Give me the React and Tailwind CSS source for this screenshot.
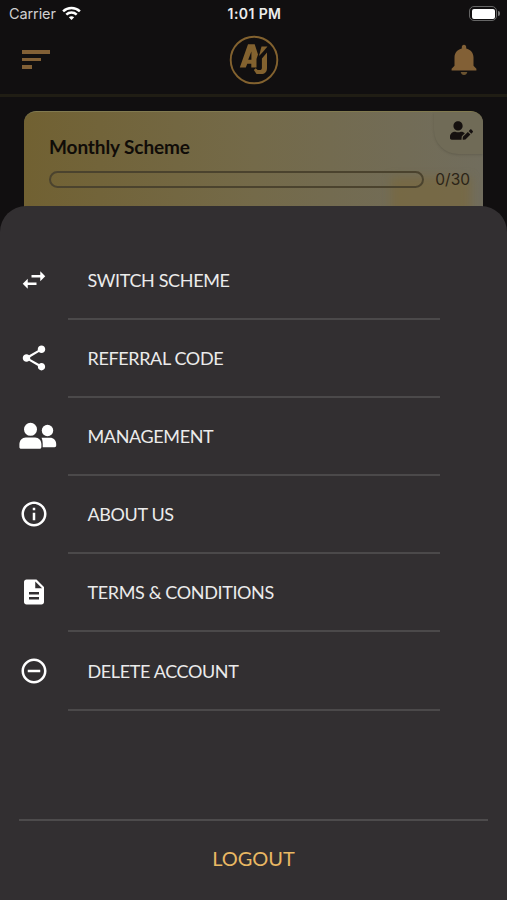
import React from 'react';
import { MdSwapHoriz, MdShare, MdInfoOutline, MdDescription, MdRemoveCircleOutline } from 'react-icons/md';
import { FaUserEdit } from 'react-icons/fa';

const PeopleIcon = () => (
  <svg width="38" height="28" viewBox="0 0 38 28" fill="currentColor">
    <circle cx="11.500" cy="7.300" r="6.500" />
    <path d="M.4 25v-2.400c0-4 2.600-7 6.400-7h9.200c3.800 0 6.400 3 6.400 7V25c0 1.100-.7 1.800-1.800 1.800H2.200C1.100 26.800.4 26.100.4 25z" />
    <circle cx="28.500" cy="8.500" r="5.700" />
    <path d="M22.500 15.800h8.500c3.600 0 6.200 2.600 6.200 6.200v1.600c0 1-.7 1.600-1.700 1.600H23.700v-3.200c0-2.600-.4-4.600-1.200-6.200z" />
  </svg>
);

const BellIcon = () => (
  <svg width="26" height="32" viewBox="0 0 26 32" fill="#826036">
    <path d="M13 .8c1.400 0 2.200 1 2.200 2.300v1.300c4.200 1 7.300 4.300 7.300 9v8.400l2.900 3v1.600H.6v-1.600l2.900-3v-8.400c0-4.700 3.100-8 7.300-9V3.100C10.800 1.800 11.600.8 13 .8z" />
    <path d="M9.700 28h6.600c-.4 1.900-1.600 2.900-3.300 2.900s-2.900-1-3.300-2.900z" fill="#6b5330" />
  </svg>
);

const Logo = () => (
  <svg width="50" height="50" viewBox="0 0 50 50" fill="#83622f">
    <circle cx="25" cy="25" r="23.300" fill="none" stroke="#83622f" strokeWidth="1.900" />
    <path fillRule="evenodd" d="M19 9.300h6.700l3.300 10.200-1.500 4.500v8.500h-5.200v-3.700h-4l-1.500 3.700h-6zM19.200 24.800h3.200v-8.300z" />
    <path d="M32.500 11.500h6l-4.200 5-4.300 4.500z" />
    <path d="M38 17.500v15.700c0 3.800-2.200 5.800-5.800 5.800h-4.700l-2.700-4 1.900-1.700 2 1.700h1.900c1.600 0 2.300-.8 2.300-2.300v-9.200z" />
  </svg>
);

const WifiIcon = () => (
  <svg width="19" height="15" viewBox="0 0 19 15" fill="none" stroke="#fff" strokeWidth="2.500">
    <path d="M1.100 5.300c4.700-4.500 12.100-4.500 16.800 0" />
    <path d="M4.300 8.600c2.900-2.800 7.500-2.800 10.400 0" />
    <path d="M6.800 11.300c1.500-1.500 3.900-1.500 5.400 0l-2.700 2.800z" fill="#fff" stroke="none" />
  </svg>
);

const menuItems = [
  { label: 'SWITCH SCHEME', icon: <MdSwapHoriz size={30} /> },
  { label: 'REFERRAL CODE', icon: <MdShare size={30} /> },
  { label: 'MANAGEMENT', icon: <PeopleIcon /> },
  { label: 'ABOUT US', icon: <MdInfoOutline size={30} /> },
  { label: 'TERMS & CONDITIONS', icon: <MdDescription size={30} /> },
  { label: 'DELETE ACCOUNT', icon: <MdRemoveCircleOutline size={30} /> },
];

const StatusBar = () => (
  <div className="grid h-[27px] grid-cols-3 items-center pl-[9px] pr-[7px] font-['Inter',sans-serif] text-white">
    <div className="flex items-center gap-[6px] text-[14.500px] text-[#d0d0d0]">
      <span className="tracking-[-0.1px]">Carrier</span>
      <WifiIcon />
    </div>
    <span className="text-center text-[14px] font-semibold tracking-[0.4px] text-[#ececec]">1:01 PM</span>
    <div className="flex items-center justify-end gap-px">
      <div className="h-[15px] w-[28px] rounded-[5px] border-[1.500px] border-[#666] p-[1.500px]">
        <div className="h-full rounded-[2px] bg-white" />
      </div>
      <div className="h-[5px] w-[2px] rounded-r-full bg-[#777]" />
    </div>
  </div>
);

const Header = () => (
  <div className="grid h-[70px] grid-cols-3 items-center border-b-[3px] border-[#201d14] pb-[2px] pl-[22px] pr-[21px]">
    <div className="flex w-7 flex-col gap-1">
      <div className="h-[3.500px] w-7 bg-[#826036]" />
      <div className="h-[3.500px] w-[19px] bg-[#826036]" />
      <div className="h-[3.500px] w-[10px] bg-[#826036]" />
    </div>
    <div className="flex justify-center">
      <Logo />
    </div>
    <div className="flex justify-end pr-[9px]">
      <BellIcon />
    </div>
  </div>
);

const SchemeCard = () => (
  <div className="relative mx-6 mt-[14px] h-[110px] overflow-hidden rounded-t-[12px] border-t border-[#817a50] bg-linear-to-r from-[#716132] via-[#746a49] to-[#716d5d] pl-[25px] pr-[13px] pt-[23px] font-['Lato',sans-serif]">
    <div className="absolute right-3 top-[65px] h-12 w-20 bg-[#7a683b]/60 blur-[4px]" />
    <div className="absolute right-0 top-0 flex h-[42px] w-[49px] items-center justify-center rounded-bl-[24px] bg-[#706b57] pb-[6px] pl-[6px] text-[#15100f] shadow-sm">
      <FaUserEdit size={23} />
    </div>
    <h2 className="text-[19px] leading-6 font-bold tracking-[-0.1px] text-[#100c08]">Monthly Scheme</h2>
    <div className="relative mt-[9px] flex items-center justify-between">
      <div className="h-[17px] w-[375px] rounded-full border-2 border-[#4b432e]" />
      <span className="pt-0.5 font-['Inter',sans-serif] text-[15.500px] leading-5 text-[#2b2417]">0/30</span>
    </div>
  </div>
);

const App = () => {
  return (
    <div className="flex h-[900px] w-[507px] flex-col overflow-hidden bg-[#110f10]">
      <StatusBar />
      <Header />
      <SchemeCard />

      {/* menu sheet slides over the scheme card */}
      <div className="relative -mt-[15px] flex grow flex-col rounded-t-[26px] bg-[#322f31] pt-[36px] font-['Lato',sans-serif]">
        {menuItems.map((item) => (
          <button key={item.label} type="button" className="flex h-[78.100px] items-stretch text-left text-white">
            <span className={`flex w-[68px] shrink-0 items-center justify-center pb-[2px] ${item.label === 'MANAGEMENT' ? 'pl-[7px]' : ''}`}>
              {item.icon}
            </span>
            <span className="flex w-[372px] items-center border-b-2 border-[#4b494a] pl-[19.500px] pt-px text-[18px] tracking-[-0.37px] text-[#ebebeb]">
              {item.label}
            </span>
          </button>
        ))}

        <div className="mx-[19px] mt-auto flex h-[81px] items-center justify-center border-t-2 border-[#4d4b4c] pb-[5px]">
          <button type="button" className="text-[20px] text-[#e9b863]">LOGOUT</button>
        </div>
      </div>
    </div>
  );
};

export default App;
